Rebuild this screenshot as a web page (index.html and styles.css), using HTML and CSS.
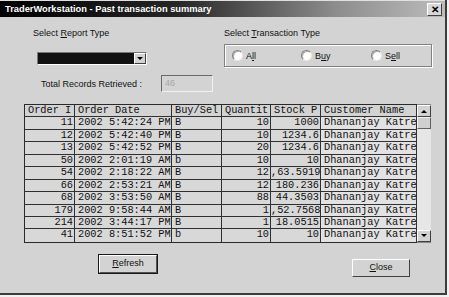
FILE: index.html
```html
<!DOCTYPE html>
<html>
<head>
<meta charset="utf-8">
<link rel="stylesheet" href="styles.css">
</head>
<body>
<div class="window">
  <div class="titlebar">
    <span class="title">TraderWorkstation - Past transaction summary</span>
    <span class="xbtn">&#x2715;</span>
  </div>
  <div class="content">
    <div class="top">
      <div class="leftcol">
        <div class="label">Select <u>R</u>eport Type</div>
        <div class="combo"><span class="combo-fill"></span><span class="combo-btn"><span class="tri-down"></span></span></div>
        <div class="total">
          <span class="label">Total Records Retrieved :</span>
          <span class="textbox">46</span>
        </div>
      </div>
      <div class="rightcol">
        <div class="label">Select <u>T</u>ransaction Type</div>
        <div class="group">
          <span class="radio-item r-all"><span class="radio"></span><span>A<u>l</u>l</span></span>
          <span class="radio-item r-buy"><span class="radio"></span><span>B<u>u</u>y</span></span>
          <span class="radio-item r-sell"><span class="radio"></span><span>S<u>e</u>ll</span></span>
        </div>
      </div>
    </div>
    <div class="gridwrap">
      <div class="grid">
        <div class="row head">
          <div class="c">Order I</div><div class="c">Order Date</div><div class="c">Buy/Sel</div><div class="c">Quantit</div><div class="c">Stock P</div><div class="c cust">Customer Name</div>
        </div>
        <div class="row"><div class="c n">11</div><div class="c">2002 5:42:24 PM</div><div class="c">B</div><div class="c n">10</div><div class="c n">1000</div><div class="c cust first">Dhananjay Katre</div></div>
        <div class="row"><div class="c n">12</div><div class="c">2002 5:42:40 PM</div><div class="c">B</div><div class="c n">10</div><div class="c n">1234.6</div><div class="c cust">Dhananjay Katre</div></div>
        <div class="row"><div class="c n">13</div><div class="c">2002 5:42:52 PM</div><div class="c">B</div><div class="c n">20</div><div class="c n">1234.6</div><div class="c cust">Dhananjay Katre</div></div>
        <div class="row"><div class="c n">50</div><div class="c">2002 2:01:19 AM</div><div class="c">b</div><div class="c n">10</div><div class="c n">10</div><div class="c cust">Dhananjay Katre</div></div>
        <div class="row"><div class="c n">54</div><div class="c">2002 2:18:22 AM</div><div class="c">B</div><div class="c n">12</div><div class="c n">,63.5919</div><div class="c cust">Dhananjay Katre</div></div>
        <div class="row"><div class="c n">66</div><div class="c">2002 2:53:21 AM</div><div class="c">B</div><div class="c n">12</div><div class="c n">180.236</div><div class="c cust">Dhananjay Katre</div></div>
        <div class="row"><div class="c n">68</div><div class="c">2002 3:53:50 AM</div><div class="c">B</div><div class="c n">88</div><div class="c n">44.3503</div><div class="c cust">Dhananjay Katre</div></div>
        <div class="row"><div class="c n">179</div><div class="c">2002 9:58:44 AM</div><div class="c">B</div><div class="c n">1</div><div class="c n">,52.7568</div><div class="c cust">Dhananjay Katre</div></div>
        <div class="row"><div class="c n">214</div><div class="c">2002 3:44:17 PM</div><div class="c">B</div><div class="c n">1</div><div class="c n">18.0515</div><div class="c cust">Dhananjay Katre</div></div>
        <div class="row"><div class="c n">41</div><div class="c">2002 8:51:52 PM</div><div class="c">b</div><div class="c n">10</div><div class="c n">10</div><div class="c cust">Dhananjay Katre</div></div>
      </div>
      <div class="vscroll">
        <div class="sbtn"><span class="tri-up"></span></div>
        <div class="thumb"></div>
        <div class="track"></div>
        <div class="sbtn"><span class="tri-down"></span></div>
      </div>
    </div>
    <div class="buttons">
      <div class="btn default"><u>R</u>efresh</div>
      <div class="btn close"><u>C</u>lose</div>
    </div>
  </div>
</div>
</body>
</html>
```
FILE: styles.css
```css
html, body {
  margin: 0;
  padding: 0;
  background: #f2f2f2;
}
body {
  font-family: "Liberation Sans", Arial, sans-serif;
  font-size: 9px;
  color: #111;
}
.window {
  width: 447px;
  height: 295px;
  box-sizing: border-box;
  background: #d3d3d3;
  border-right: 2px solid #3c3c3c;
  border-bottom: 2px solid #3c3c3c;
  display: flex;
  flex-direction: column;
}
.titlebar {
  height: 17px;
  flex: none;
  display: flex;
  align-items: center;
  justify-content: space-between;
  padding: 0 3px 0 5px;
  background: linear-gradient(to right, #000 0%, #262626 40%, #8c8c8c 75%, #bcbcbc 100%);
  border-top: 1px solid #e0e0e0;
  box-sizing: border-box;
}
.title {
  color: #fff;
  font-weight: bold;
  font-size: 9.3px;
  font-family: "Liberation Sans", Arial, sans-serif;
}
.xbtn {
  width: 15px;
  height: 13px;
  box-sizing: border-box;
  background: #d8d8d8;
  border: 1px solid;
  border-color: #fff #404040 #404040 #fff;
  font-size: 10px;
  font-weight: bold;
  line-height: 11px;
  text-align: center;
  color: #000;
}
.content {
  flex: 1;
  display: flex;
  flex-direction: column;
}
.top {
  display: flex;
  padding-left: 33px;
  padding-top: 11px;
}
.leftcol {
  width: 191px;
  display: flex;
  flex-direction: column;
}
.label {
  line-height: 10px;
}
.combo {
  margin: 14px 0 0 4px;
  width: 110px;
  height: 13px;
  box-sizing: border-box;
  border: 1px solid;
  border-color: #777 #fff #fff #777;
  display: flex;
  background: #111;
}
.combo-fill {
  flex: 1;
  background: #111;
}
.combo-btn {
  width: 10px;
  background: #d3d3d3;
  border: 1px solid;
  border-color: #fff #404040 #404040 #fff;
  display: flex;
  align-items: center;
  justify-content: center;
}
.tri-down {
  width: 0;
  height: 0;
  border-left: 3px solid transparent;
  border-right: 3px solid transparent;
  border-top: 3px solid #000;
}
.tri-up {
  width: 0;
  height: 0;
  border-left: 3px solid transparent;
  border-right: 3px solid transparent;
  border-bottom: 3px solid #000;
}
.total {
  margin: 10px 0 0 8px;
  display: flex;
  align-items: center;
}
.total .label {
  width: 120px;
}
.textbox {
  width: 52px;
  height: 17px;
  box-sizing: border-box;
  border: 1px solid;
  border-color: #6a6a6a #f0f0f0 #f0f0f0 #6a6a6a;
  color: #a6a6a6;
  padding: 2px 0 0 3px;
  line-height: 11px;
}
.rightcol {
  display: flex;
  flex-direction: column;
}
.group {
  margin-top: 6px;
  width: 208px;
  height: 23px;
  box-sizing: border-box;
  border: 1px solid #808080;
  box-shadow: inset 1px 1px 0 #fff, 1px 1px 0 #fff;
  display: flex;
  align-items: center;
  padding-left: 7px;
}
.radio-item {
  display: flex;
  align-items: center;
  gap: 3px;
}
.r-all { width: 69px; }
.r-buy { width: 70px; }
.radio {
  width: 9px;
  height: 9px;
  border-radius: 50%;
  background: #fff;
  border: 1px solid;
  border-color: #808080 #e8e8e8 #e8e8e8 #808080;
  box-shadow: inset 1px 1px 0 #b0b0b0;
}
.gridwrap {
  margin: 12px 0 0 24px;
  display: flex;
  width: 407px;
}
.grid {
  border-left: 1px solid #2a2a2a;
  border-top: 1px solid #2a2a2a;
  border-bottom: 1px solid #2a2a2a;
  font-family: "Liberation Mono", "Courier New", monospace;
  font-size: 10.3px;
  color: #111;
}
.row {
  display: grid;
  grid-template-columns: 50px 97px 50px 49px 50px 96px;
  height: 12.45px;
  box-sizing: border-box;
  border-bottom: 1px solid #303030;
}
.row:last-child {
  border-bottom: none;
}
.c {
  background: #d8d8d8;
  border-right: 1px solid #303030;
  white-space: nowrap;
  overflow: hidden;
  line-height: 11px;
  padding: 0 1px 0 3px;
}
.c.n {
  text-align: right;
  padding: 0 1px 0 0;
}
.head .c {
  background: #d3d3d3;
  padding-left: 3px;
}
.c.cust {
  background: #e2e2e2;
  border-left: 1px solid #303030;
  border-right: 1px solid #303030;
  margin-left: -1px;
}
.head .c.cust {
  background: #d3d3d3;
}
.vscroll {
  width: 14px;
  display: flex;
  flex-direction: column;
  background: #e6e6e6;
  border-top: 1px solid #888;
  border-bottom: 1px solid #888;
}
.sbtn {
  height: 12px;
  box-sizing: border-box;
  background: #d3d3d3;
  border: 1px solid;
  border-color: #fff #404040 #404040 #fff;
  display: flex;
  align-items: center;
  justify-content: center;
}
.thumb {
  height: 12px;
  box-sizing: border-box;
  background: #cfcfcf;
  border: 1px solid;
  border-color: #f4f4f4 #606060 #606060 #f4f4f4;
}
.track {
  flex: 1;
}
.buttons {
  display: flex;
  align-items: flex-start;
  margin-top: 12px;
  padding-left: 99px;
}
.btn {
  width: 58px;
  height: 18px;
  box-sizing: border-box;
  background: #d3d3d3;
  border: 1px solid;
  border-color: #fff #404040 #404040 #fff;
  text-align: center;
  line-height: 15px;
}
.btn.default {
  outline: 1px solid #1a1a1a;
  border-color: #fff #505050 #505050 #fff;
}
.btn.close {
  margin: 4px 0 0 195px;
}
```
